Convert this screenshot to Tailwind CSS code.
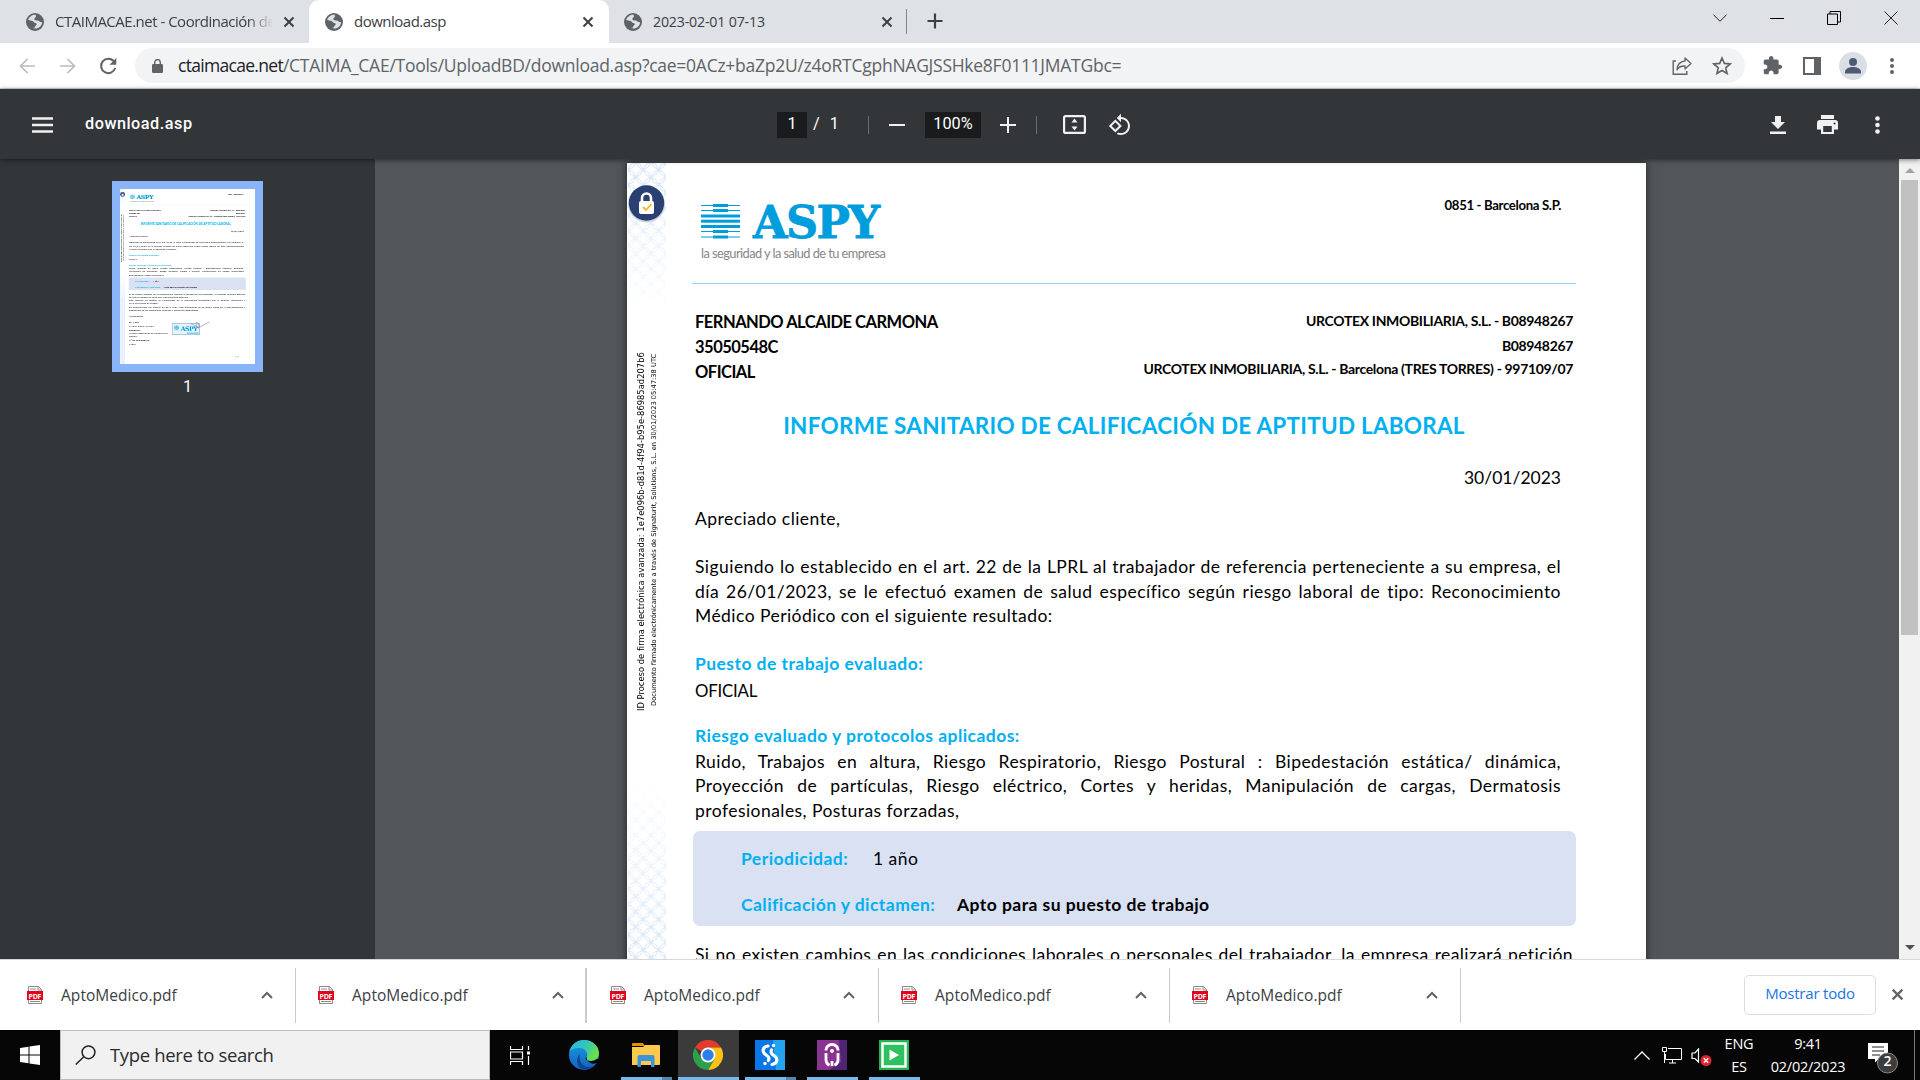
<!DOCTYPE html>
<html lang="es">
<head>
<meta charset="utf-8">
<title>download.asp</title>
<script src="https://cdn.jsdelivr.net/npm/@tailwindcss/browser@4"></script>
</head>
<body class="w-[1920px] h-[1080px] overflow-hidden flex flex-col bg-white font-['Open_Sans','Noto_Sans',sans-serif]">
<svg class="hidden">
  <symbol id="globe" viewBox="0 0 18 18"><circle cx="9" cy="9" r="9" fill="#5f6368"/><path d="M9.8 1.9C6.5 1.6 3.2 3.7 2.2 7c1.700 .3 3 .5 4.300 .9 1.300 .3 1.500 1.800 2.800 2 1.100 .1 1.700 .6 1.400 1.700-.3 1-1.400 1-1.600 2.100-.1.9-.9 1.300-2.400 1.100 1 .6 2.700 1 4.100.7 3.200-.7 5.300-3.300 5.300-6.400-1.200.2-2.600 0-3-1-.4-.9-1.600-.7-2.600-.6-1.200 0-2.300-.6-2.200-1.700.1-1.200 1.300-1.100 1.600-2.100.2-.6-.1-1.200-.1-1.800z" fill="#dee1e6"/></symbol>
  <symbol id="x" viewBox="0 0 12 12"><path d="M1.500 1.500l9 9M10.500 1.500l-9 9" stroke="currentColor" stroke-width="2" fill="none"/></symbol>
  <symbol id="up" viewBox="0 0 12 8"><path d="M1 7l5-5 5 5" stroke="#5f6368" stroke-width="2" fill="none"/></symbol>
  <symbol id="pdf" viewBox="0 0 16 18"><path d="M1.500 .5h10l3 3v14h-13z" fill="#fff" stroke="#8a8a8a"/><path d="M11 .5v3.500h3.500M3 3h6M3 15.500h10" stroke="#8a8a8a" fill="none"/><rect y="5" width="16" height="9" fill="#e2041b"/><text x="8" y="12.500" text-anchor="middle" font-family="Open Sans" font-weight="700" font-size="7" textLength="13" fill="#fff">PDF</text></symbol>
  <symbol id="bars" viewBox="0 0 39 35"><g fill="#009ddc"><rect y="1" width="39" height="1"/><rect x="12" width="15" height="3"/><rect y="6" width="39" height="1"/><rect x="12" y="5" width="15" height="3"/><rect y="10.500" width="39" height="3"/><rect y="15.700" width="39" height="3"/><rect y="21" width="39" height="3"/><rect y="27" width="39" height="1"/><rect x="12" y="26" width="15" height="3"/><rect y="32.500" width="39" height="1"/><rect x="12" y="31.500" width="15" height="3"/></g></symbol>
</svg>

<!-- Tab strip -->
<header class="h-[43px] shrink-0 bg-[#dee1e6] flex items-stretch text-[15px] text-[#3c4043] tracking-[-0.5px]">
  <div class="w-[309px] flex items-center pl-[26px] pr-3.5 bg-[#dee1e6]">
    <svg class="w-[18px] h-[18px] shrink-0"><use href="#globe"/></svg>
    <span class="ml-[11px] w-[219px] whitespace-nowrap overflow-hidden [mask-image:linear-gradient(90deg,#000_88%,transparent)]">CTAIMACAE.net - Coordinación de</span>
    <svg class="ml-[10px] w-3 h-3 shrink-0 text-[#3c4043]"><use href="#x"/></svg>
  </div>
  <div class="w-[300px] flex items-center pl-4 pr-[15px] bg-white rounded-t-[10px]">
    <svg class="w-[18px] h-[18px] shrink-0"><use href="#globe"/></svg>
    <span class="ml-[11px] flex-1 whitespace-nowrap">download.asp</span>
    <svg class="w-3 h-3 shrink-0"><use href="#x"/></svg>
  </div>
  <div class="w-[297px] flex items-center pl-[15px] pr-[13px]">
    <svg class="w-[18px] h-[18px] shrink-0"><use href="#globe"/></svg>
    <span class="ml-[11px] flex-1 whitespace-nowrap tracking-[-0.18px] text-[14.2px]">2023-02-01 07-13</span>
    <svg class="w-3 h-3 shrink-0"><use href="#x"/></svg>
  </div>
  <div class="w-px h-[25px] mt-[9px] bg-[#80868b]"></div>
  <svg class="ml-5 mt-[13px] w-4 h-4" viewBox="0 0 16 16"><path d="M8 .5v15M.5 8h15" stroke="#3c4043" stroke-width="2.200"/></svg>
  <div class="ml-auto flex items-center gap-[43px] pr-[22px] h-9">
    <svg class="w-[14px] h-2" viewBox="0 0 14 8"><path d="M.5.8L7 7.200 13.500.8" stroke="#222" fill="none"/></svg>
    <svg class="w-[14px] h-3" viewBox="0 0 14 12"><path d="M0 6.500h14" stroke="#000"/></svg>
    <svg class="w-[14px] h-[14px]" viewBox="0 0 14 14"><path d="M.5 3h10v10.500H.5zM3 3V.5h10.500V11H11" stroke="#000" fill="none"/></svg>
    <svg class="w-[14px] h-[14px]" viewBox="0 0 14 14"><path d="M.5.5l13 13M13.500.5l-13 13" stroke="#222" fill="none"/></svg>
  </div>
</header>

<!-- Address bar -->
<div class="h-[46px] shrink-0 border-b border-[#d5d7da] flex items-center bg-white">
  <svg class="ml-[19px] w-4 h-4" viewBox="0 0 16 16"><path d="M16 8H1.500M8.500 1L1.500 8l7 7" stroke="#babcbe" stroke-width="1.700" fill="none"/></svg>
  <svg class="ml-[25px] w-4 h-4" viewBox="0 0 16 16"><path d="M0 8h14.500M7.500 1l7 7-7 7" stroke="#babcbe" stroke-width="1.700" fill="none"/></svg>
  <svg class="ml-[23px] w-[18px] h-[18px]" viewBox="0 0 18 18"><path d="M15 4.500A7.200 7.200 0 1 0 16.200 11" stroke="#5f6368" stroke-width="2" fill="none"/><path d="M17.300 1v6.800h-6.800z" fill="#5f6368"/></svg>
  <div class="ml-[18px] w-[1610px] h-[35px] rounded-full bg-[#f1f3f4] flex items-center pl-[17px] pr-[13px]">
    <svg class="w-[11px] h-[14px]" viewBox="0 0 11 14"><rect y="5" width="11" height="9" rx="1.200" fill="#5f6368"/><path d="M2.700 6V3.400a2.800 2.800 0 0 1 5.600 0V6" stroke="#5f6368" stroke-width="1.400" fill="none"/></svg>
    <span class="ml-[15px] text-[17.5px] tracking-[-0.26px] whitespace-nowrap text-[#5f6368]"><span class="text-[#202124] tracking-[-0.7px]">ctaimacae.net</span>/CTAIMA_CAE/Tools/UploadBD/download.asp?cae=0ACz+baZp2U/z4oRTCgphNAGJSSHke8F0111JMATGbc=</span>
    <svg class="ml-auto w-5 h-[18px]" viewBox="0 0 20 18"><path d="M4 4H1.200v13.200h13.600V14" stroke="#5f6368" stroke-width="1.400" fill="none"/><path d="M13 1l6 5.500-6 5.500V9c-4-.2-6.500 1-8 4 .2-5 3-8.500 8-9z" stroke="#5f6368" stroke-width="1.300" fill="none" stroke-linejoin="round"/></svg>
    <svg class="ml-[20px] w-5 h-[19px]" viewBox="0 0 20 19"><path d="M10 2l2.300 5.400 5.900.5-4.500 3.900 1.400 5.700L10 14.500l-5.100 3 1.400-5.700-4.500-3.900 5.900-.5z" stroke="#5f6368" stroke-width="1.600" fill="none"/></svg>
  </div>
  <svg class="ml-[17px] w-[21px] h-[21px]" viewBox="0 0 24 24"><path fill="#5f6368" d="M20.500 11H19V7c0-1.100-.9-2-2-2h-4V3.500C13 2.120 11.880 1 10.500 1S8 2.120 8 3.500V5H4c-1.100 0-1.990.9-1.990 2v3.800H3.500c1.490 0 2.700 1.210 2.700 2.700s-1.210 2.700-2.700 2.700H2V20c0 1.100.9 2 2 2h3.800v-1.500c0-1.490 1.210-2.700 2.700-2.700 1.490 0 2.700 1.210 2.700 2.700V22H17c1.100 0 2-.9 2-2v-4h1.500c1.380 0 2.500-1.120 2.500-2.500S21.880 11 20.500 11z"/></svg>
  <svg class="ml-[20px] w-[18px] h-[18px]" viewBox="0 0 18 18"><path d="M1 1h16v16H1z" fill="#fff" stroke="#5f6368" stroke-width="2"/><path d="M11 1h6v16h-6z" fill="#5f6368"/></svg>
  <svg class="ml-[18px] w-7 h-7" viewBox="0 0 28 28"><circle cx="14" cy="14" r="14" fill="#dadfe6"/><circle cx="14" cy="10" r="4" fill="#4d5a73"/><path d="M6 21.500v-1.500c0-3.500 4-5 8-5s8 1.500 8 5v1.500z" fill="#4d5a73"/></svg>
  <svg class="ml-[23px] w-1 h-4" viewBox="0 0 4 16"><g fill="#5f6368"><circle cx="2" cy="2" r="2"/><circle cx="2" cy="8" r="2"/><circle cx="2" cy="14" r="2"/></g></svg>
</div>

<!-- PDF viewer toolbar -->
<div class="h-[70px] shrink-0 bg-[#323639] flex items-center pt-px text-white font-[Roboto,sans-serif] relative z-10 shadow-[0_1px_5px_rgba(0,0,0,0.5)]">
  <svg class="ml-8 w-[21px] h-4" viewBox="0 0 21 16"><path d="M0 1.500h21M0 8h21M0 14.500h21" stroke="#f1f1f1" stroke-width="2.400"/></svg>
  <span class="ml-8 w-[692px] text-[16.25px] tracking-[0.5px] font-medium">download.asp</span>
  <span class="w-[30px] h-[26px] bg-[#191b1c] flex items-center justify-center text-[16.25px]">1</span>
  <span class="w-[61px] pl-1.5 text-[16.25px] flex gap-[10px]"><span>/</span><span>1</span></span>
  <span class="w-px h-[18px] bg-[#6b6e70]"></span>
  <svg class="ml-[20px] w-4 h-4" viewBox="0 0 16 16"><path d="M0 8h16" stroke="#f1f1f1" stroke-width="2"/></svg>
  <span class="ml-5 w-14 h-[26px] bg-[#191b1c] flex items-center justify-center text-[16.25px]">100%</span>
  <svg class="ml-[19px] w-4 h-4" viewBox="0 0 16 16"><path d="M0 8h16M8 0v16" stroke="#f1f1f1" stroke-width="2"/></svg>
  <span class="ml-[20px] w-px h-[18px] bg-[#6b6e70]"></span>
  <svg class="ml-[26px] w-[23px] h-[19px]" viewBox="0 0 23 19"><rect x="1.100" y="1.100" width="20.800" height="16.800" rx="1.500" stroke="#f1f1f1" stroke-width="2.200" fill="none"/><path d="M11.500 3.500l3 4h-6zM11.500 15.500l3-4h-6z" fill="#f1f1f1"/></svg>
  <svg class="ml-[22px] w-6 h-6" viewBox="0 0 24 24"><path fill="#f1f1f1" d="M7.340 6.410L.86 12.900l6.490 6.480 6.490-6.480-6.500-6.490zM3.690 12.900l3.660-3.660L11 12.900l-3.660 3.660-3.650-3.660zm15.670-6.260C17.610 4.880 15.300 4 13 4V.76L8.760 5 13 9.240V6c1.790 0 3.580.68 4.950 2.050 2.730 2.730 2.730 7.170 0 9.900C16.580 19.320 14.790 20 13 20c-.97 0-1.940-.21-2.840-.61l-1.490 1.490C10.020 21.620 11.510 22 13 22c2.300 0 4.610-.88 6.360-2.640 3.520-3.510 3.520-9.210 0-12.720z"/></svg>
  <svg class="ml-auto w-4 h-[18px]" viewBox="0 0 16 18"><path fill="#f1f1f1" d="M5 0h6v6h4l-7 7-7-7h4zM0 15.500h16V18H0z"/></svg>
  <svg class="ml-[31px] w-[21px] h-[19px]" viewBox="0 0 21 19"><path fill="#f1f1f1" d="M4 0h13v4H4zM3 5h15a3 3 0 0 1 3 3v6.500h-4V19H4v-4.500H0V8a3 3 0 0 1 3-3zm3.200 6v6h8.600v-6z"/><circle cx="17.500" cy="8.500" r="1" fill="#323639"/></svg>
  <svg class="ml-[37px] mr-[40px] w-[5px] h-[18px]" viewBox="0 0 5 18"><g fill="#f1f1f1"><circle cx="2.500" cy="2.500" r="2.300"/><circle cx="2.500" cy="9" r="2.300"/><circle cx="2.500" cy="15.500" r="2.300"/></g></svg>
</div>

<!-- PDF viewer body -->
<main class="h-[800px] shrink-0 flex overflow-hidden bg-[#525659]">
  <aside class="w-[375px] bg-[#323639] flex flex-col items-center pt-[22px] font-[Roboto,sans-serif] text-white">
    <div class="w-[151px] h-[191px] bg-[#8ab4f8] p-2">
      <div id="thumb" class="w-[135px] h-[175px] overflow-hidden" aria-hidden="true"></div>
    </div>
    <span class="mt-[3px] text-[16.25px]">1</span>
  </aside>
  <div class="flex-1 pl-[252px] pt-1 overflow-hidden">
    <div id="page" class="relative w-[1019px] h-[1321px] bg-white text-black font-[Lato,sans-serif] [font-variant-ligatures:none] text-[17.5px] tracking-[0.45px] leading-[24px] pl-[68px] pr-[85px] shadow-[0_0_8px_rgba(0,0,0,0.6)]">
      <svg class="absolute left-px top-0 w-[39px] h-[1321px]" viewBox="0 0 39 1321">
        <defs>
          <pattern id="rings" width="15.300" height="15.300" patternUnits="userSpaceOnUse" y="-1"><g fill="none" stroke="#a9cbee" stroke-width=".9"><circle cx="7.650" cy="7.650" r="6.900"/><circle cx="0" cy="0" r="6.900"/><circle cx="15.300" cy="0" r="6.900"/><circle cx="0" cy="15.300" r="6.900"/><circle cx="15.300" cy="15.300" r="6.900"/></g></pattern>
          <linearGradient id="fadeOut" x2="0" y2="1"><stop stop-color="#fff" stop-opacity=".35"/><stop offset="1" stop-color="#fff"/></linearGradient>
          <linearGradient id="fadeIn" x2="0" y2="1"><stop stop-color="#fff"/><stop offset="1" stop-color="#fff" stop-opacity=".3"/></linearGradient>
        </defs>
        <rect width="38" height="146" fill="url(#rings)"/><rect width="39" height="146" fill="url(#fadeOut)"/>
        <rect y="620" width="38" height="701" fill="url(#rings)"/><rect y="620" width="39" height="200" fill="url(#fadeIn)"/>
      </svg>
      <svg class="absolute left-0 top-[20px] w-10 h-10" viewBox="0 0 40 40"><circle cx="19.500" cy="21" r="18.500" fill="#ccd2dc"/><circle cx="19.500" cy="20" r="17.700" fill="#2a4073"/><rect x="12" y="18" width="15" height="13" rx="2" fill="#fff"/><path d="M15 19v-4a4.500 4.500 0 0 1 9 0v4" stroke="#fff" stroke-width="2.600" fill="none"/><path d="M16 24l3 3 5.500-6" stroke="#f7b916" stroke-width="1.800" fill="none"/></svg>
      <div class="absolute left-[8px] top-[190px] h-[358px] w-[13px] [writing-mode:vertical-rl] rotate-180 font-['DejaVu_Sans',sans-serif] text-[8.4px] tracking-normal leading-[13px] whitespace-nowrap">ID Proceso de firma electrónica avanzada: 1e7e096b-d81d-4f94-b95e-86985ad207b6</div>
      <div class="absolute left-[21px] top-[190px] h-[353px] w-[13px] [writing-mode:vertical-rl] rotate-180 font-['DejaVu_Sans',sans-serif] text-[6.7px] tracking-normal leading-[13px] whitespace-nowrap">Documento firmado electrónicamente a través de Signaturit, Solutions, S.L. en 30/01/2023 05:47:38 UTC</div>

      <div class="h-[121px] -ml-[3px] -mr-[15px] pl-[9px] pr-[15px] flex justify-between border-b border-[#8dd3f5]">
        <div class="pt-[41px]">
          <div class="flex items-start h-[40px]">
            <svg class="w-[39px] h-[35px]"><use href="#bars"/></svg>
            <span class="ml-[13px] mt-px font-['DejaVu_Serif',serif] font-bold text-[44.5px] leading-[35px] tracking-[-1.6px] text-[#009ddc] [-webkit-text-stroke:0.8px_#009ddc]">ASPY</span>
          </div>
          <div class="text-[12.8px] text-[#868686] leading-[19px] tracking-[-0.55px] whitespace-nowrap">la seguridad y la salud de tu empresa</div>
        </div>
        <div class="pt-[30px] text-[13.2px] tracking-[-0.35px] font-bold">0851 - Barcelona S.P.</div>
      </div>
      <div class="h-[127px] pt-[26px] -mr-[12px] flex justify-between font-bold leading-[25px]">
        <div class="text-[16.5px] tracking-[-0.5px]">
          <div>FERNANDO ALCAIDE CARMONA</div><div>35050548C</div><div>OFICIAL</div>
        </div>
        <div class="-mt-[2px] text-right text-[14px] tracking-[-0.34px]">
          <div>URCOTEX INMOBILIARIA, S.L. - B08948267</div><div>B08948267</div><div class="-mt-[2px]">URCOTEX INMOBILIARIA, S.L. - Barcelona (TRES TORRES) - 997109/07</div>
        </div>
      </div>
      <h1 class="h-[30px] text-center mr-[8px] text-[22.5px] tracking-[0.25px] leading-[30px] font-bold text-[#00b0f0] whitespace-nowrap">INFORME SANITARIO DE CALIFICACIÓN DE APTITUD LABORAL</h1>
      <div class="mt-[25px] text-right tracking-normal">30/01/2023</div>
      <div class="mt-[17px]">Apreciado cliente,</div>
      <div class="mt-6 leading-[24.7px] whitespace-nowrap">
        <div class="[text-align-last:justify]">Siguiendo lo establecido en el art. 22 de la LPRL al trabajador de referencia perteneciente a su empresa, el</div>
        <div class="[text-align-last:justify]">día 26/01/2023, se le efectuó examen de salud específico según riesgo laboral de tipo: Reconocimiento</div>
        <div>Médico Periódico con el siguiente resultado:</div>
      </div>
      <h2 class="mt-[23px] font-bold text-[#00b0f0]">Puesto de trabajo evaluado:</h2>
      <div class="mt-[2.5px] text-[16.8px] tracking-[-0.2px]">OFICIAL</div>
      <h2 class="mt-[21px] font-bold text-[#00b0f0]">Riesgo evaluado y protocolos aplicados:</h2>
      <div class="mt-[2px] leading-[24.7px] whitespace-nowrap">
        <div class="[text-align-last:justify]">Ruido, Trabajos en altura, Riesgo Respiratorio, Riesgo Postural : Bipedestación estática/ dinámica,</div>
        <div class="[text-align-last:justify]">Proyección de partículas, Riesgo eléctrico, Cortes y heridas, Manipulación de cargas, Dermatosis</div>
        <div>profesionales, Posturas forzadas,</div>
      </div>
      <div class="mt-[7px] h-[95px] -ml-[2px] -mr-[15px] pl-[48px] pt-[16px] rounded-[7px] bg-[#d9e1f3]">
        <div class="flex"><span class="font-bold text-[#00b0f0] w-[132px]">Periodicidad:</span><span>1 año</span></div>
        <div class="flex mt-[22px] font-bold"><span class="text-[#00b0f0] w-[216px]">Calificación y dictamen:</span><span>Apto para su puesto de trabajo</span></div>
      </div>
      <div class="mt-[17px] -mr-[12px] leading-[23px] whitespace-nowrap [text-align-last:justify] tracking-[0.4px]">Si no existen cambios en las condiciones laborales o personales del trabajador, la empresa realizará petición</div>
    </div>
  </div>
  <div class="w-[21px] bg-[#f1f1f1] flex flex-col items-center">
    <svg class="mt-[9px] w-2.5 h-[5px]" viewBox="0 0 10 5"><path d="M5 0l5 5H0z" fill="#a3a3a3"/></svg>
    <div class="mt-[7px] w-[17px] h-[455px] bg-[#c1c1c1]"></div>
    <svg class="mt-auto mb-[9px] w-2.5 h-[5px]" viewBox="0 0 10 5"><path d="M0 0h10L5 5z" fill="#505050"/></svg>
  </div>
</main>

<!-- Lower part of the page, drawn in the preview -->
<template id="rest">
  <div class="-mr-[12px] leading-[23px] whitespace-nowrap">
    <div>de nuevo examen de salud con la periodicidad señalada.</div>
    <div class="[text-align-last:justify]">Este informe de aptitud se fundamenta en la información transmitida por la persona reconocida y</div>
    <div>en la evaluación de riesgos.</div>
    <div class="mt-[5px] [text-align-last:justify]">En cumplimiento del artículo 22 de la LPRL, este documento ha de formar parte de la documentación a</div>
    <div>disposición de las autoridades laborales y sanitarias competentes.</div>
    <div class="mt-[23px]">Atentamente,</div>
    <div class="mt-[27px] flex">
      <div class="w-[326px]">
        <div class="font-bold">Dr. / Dra.</div>
        <div class="mt-[7px]">MARIO COSTA GARCIA</div>
        <div class="mt-[7px] font-bold">Titulación:</div>
        <div>Médico especialista en Medicina del</div>
        <div>Trabajo</div>
        <div class="mt-[7px] font-bold">Nº de Colegiado/a:</div>
        <div class="mt-[4px]">24504</div>
      </div>
      <svg class="mt-[2px] w-[290px] h-[110px]" viewBox="0 0 290 110"><rect x="2" y="18" width="204" height="84" fill="#e6f4fb" stroke="#6e9bb8" stroke-width="4"/><svg x="12" y="30" width="42" height="40"><use href="#bars"/></svg><text x="64" y="70" font-family="DejaVu Serif" font-weight="700" font-size="48" textLength="130" fill="#009ddc">ASPY</text><path d="M110 84h90v12h-90z" fill="#8dd3f5"/><path d="M140 20c30 0 60 50 62 20s-30-50-20-10 20 10 100-25" stroke="#6a6f98" stroke-width="4" fill="none"/></svg>
    </div>
    <div class="mt-[66px] pl-[800px] text-[14px]">1 / 1</div>
  </div>
</template>

<!-- Download shelf -->
<div class="h-[71px] shrink-0 border-t border-[#d5d7da] bg-white flex items-center text-[15.5px] tracking-[0.05px] text-[#3c4043]">
  <div class="w-[296px] h-[55px] border-r border-[#c8cacd] flex items-center pl-[27px]"><svg class="w-4 h-[18px]"><use href="#pdf"/></svg><span class="ml-[18px] w-[200px] pt-0.5">AptoMedico.pdf</span><svg class="w-3 h-2"><use href="#up"/></svg></div>
  <div class="w-[291px] h-[55px] border-r-2 border-[#c8cacd] flex items-center pl-[22px]"><svg class="w-4 h-[18px]"><use href="#pdf"/></svg><span class="ml-[18px] w-[200px] pt-0.5">AptoMedico.pdf</span><svg class="w-3 h-2"><use href="#up"/></svg></div>
  <div class="w-[292px] h-[55px] border-r border-[#c8cacd] flex items-center pl-[23px]"><svg class="w-4 h-[18px]"><use href="#pdf"/></svg><span class="ml-[18px] w-[199px] pt-0.5">AptoMedico.pdf</span><svg class="w-3 h-2"><use href="#up"/></svg></div>
  <div class="w-[291px] h-[55px] border-r border-[#c8cacd] flex items-center pl-[22px]"><svg class="w-4 h-[18px]"><use href="#pdf"/></svg><span class="ml-[18px] w-[200px] pt-0.5">AptoMedico.pdf</span><svg class="w-3 h-2"><use href="#up"/></svg></div>
  <div class="w-[291px] h-[55px] border-r border-[#c8cacd] flex items-center pl-[22px]"><svg class="w-4 h-[18px]"><use href="#pdf"/></svg><span class="ml-[18px] w-[200px] pt-0.5">AptoMedico.pdf</span><svg class="w-3 h-2"><use href="#up"/></svg></div>
  <div class="ml-auto mr-[15px] w-[132px] h-10 rounded-[5px] border border-[#dadce0] flex items-center justify-center pb-[3px] text-[15px] tracking-[-0.2px] text-[#1a73e8]">Mostrar todo</div>
  <svg class="mr-4 w-[13px] h-[13px] mb-0.5 text-[#5f6368]"><use href="#x"/></svg>
</div>

<!-- Taskbar -->
<footer class="h-[50px] shrink-0 bg-[#060606] flex items-stretch text-white">
  <div class="w-[60px] flex items-center justify-center"><svg class="w-5 h-5" viewBox="0 0 20 20"><path fill="#fff" d="M0 3l8.500-1.200v7.700H0zM9.500 1.600L20 0v9.500H9.500zM0 10.500h8.500v7.700L0 17zM9.500 10.500H20V20L9.500 18.400z"/></svg></div>
  <div class="w-[430px] bg-[#f1f1f1] border border-[#bdbdbd] flex items-center pl-3.5 text-[#2b2b2b]">
    <svg class="w-[21px] h-5" viewBox="0 0 21 20"><circle cx="13.500" cy="7.300" r="6.400" stroke="#222" stroke-width="1.500" fill="none"/><path d="M8.800 11.800L.8 19.500" stroke="#222" stroke-width="1.500"/></svg>
    <span class="ml-3.5 text-[18.5px] tracking-[-0.35px]">Type here to search</span>
  </div>
  <div class="w-[60px] flex items-center justify-center"><svg class="w-5 h-[19px]" viewBox="0 0 20 19"><path d="M.5 0v3.500h12V0M.5 19v-3.500h12V19M.5 6h12v7H.5zM18.500 0v4M18.500 10v9" stroke="#fff" stroke-width="1.200" fill="none"/><path d="M17 5.500h3v3h-3z" fill="#fff"/></svg></div>
  <div class="w-[66px] flex items-center justify-center pl-0.5">
    <svg class="w-[30px] h-[30px]" viewBox="0 0 30 30">
      <defs><linearGradient id="eg" x1="0" y1="0" x2="1" y2=".4"><stop stop-color="#2ab4e8"/><stop offset=".6" stop-color="#33c7b4"/><stop offset="1" stop-color="#6be04a"/></linearGradient><linearGradient id="eb" x2="0" y2="1"><stop stop-color="#1b9de2"/><stop offset="1" stop-color="#1160c4"/></linearGradient></defs>
      <circle cx="15" cy="15" r="15" fill="url(#eb)"/>
      <path d="M.3 12C1.500 5 7.500 0 15 0c8.500 0 15 6 15 13 0 5-3.500 8-8 8-3.500 0-5.500-1-5.500-2.500 0-1 1.700-1.500 1.700-4C18.200 11 15 8 10.500 8 6 8 2 9.500.3 12z" fill="url(#eg)"/>
      <path d="M11 14c-2 6 2 12 8 13 3.500.3 6.500-1 8.500-4-2 3.700-7 7-12.500 7C9 29 5.500 19 11 14z" fill="#10458c"/>
      <path d="M18.200 14.500c0 2.500-1.700 3-1.700 4 0 1.500 2 2.500 5.500 2.500 2.500 0 4.500-.8 5.900-2.200l3 1-3.400 3.200c-5 2.500-12-2-9.300-8.500z" fill="#060606"/>
    </svg>
  </div>
  <div class="w-[62px] flex items-center justify-center relative pr-[14px]">
    <svg class="w-7 h-6 ml-3" viewBox="0 0 28 24"><path d="M0 1a1 1 0 0 1 1-1h10l2 3H0z" fill="#dc9400"/><path d="M0 4h11l2-2h14a1 1 0 0 1 1 1v18a1 1 0 0 1-1 1H0z" fill="#fdca4e"/><path d="M5.500 24V14a2 2 0 0 1 2-2h13a2 2 0 0 1 2 2v10h-3.500v-6h-10v6z" fill="#3d93d8"/></svg>
    <span class="absolute left-[5px] bottom-0 w-[41px] h-[3px] bg-[#76b9ed]"></span><span class="absolute left-[46px] bottom-0 w-2.5 h-[3px] bg-[#5586b0]"></span>
  </div>
  <div class="w-[61px] bg-[#3b3b3b] border-b-3 border-[#76b9ed] flex items-center justify-center pr-[2px]">
    <svg class="w-[30px] h-[30px] mt-[3px]" viewBox="0 0 30 30"><path d="M15 15L2 7.500A15 15 0 0 1 28 7.500H15z" fill="#e33b2e"/><path d="M15 7.500h13A15 15 0 0 1 15 30l6.500-11.200z" fill="#fbc116"/><path d="M2 7.500A15 15 0 0 0 15 30l6.500-11.200L15 22.500 8.500 18.800z" fill="#2da04c"/><circle cx="15" cy="15" r="7.500" fill="#fff"/><circle cx="15" cy="15" r="5.700" fill="#2f7de9"/></svg>
  </div>
  <div class="w-[62px] relative flex items-center justify-center">
    <svg class="w-[30px] h-[30px]" viewBox="0 0 30 30"><rect width="30" height="30" fill="#0878e8"/><path d="M18 0h12v30h-9z" fill="#22a5ee"/><g stroke="#fff" stroke-width="3.200" fill="none" stroke-linecap="round"><path d="M13 6C7 7 7 12 10.500 14.500S14.500 18 13.500 20.500M17 24.500c6-1 6-6 2.500-8.500S15.500 12.500 16.500 10"/></g><circle cx="18.500" cy="5.500" r="1.700" fill="#fff"/><circle cx="10" cy="23.500" r="1.700" fill="#fff"/></svg>
    <span class="absolute left-[6px] bottom-0 w-[41px] h-[3px] bg-[#76b9ed]"></span><span class="absolute left-[47px] bottom-0 w-2.5 h-[3px] bg-[#5586b0]"></span>
  </div>
  <div class="w-[62px] relative flex items-center justify-center">
    <svg class="w-[30px] h-[30px]" viewBox="0 0 30 30"><rect width="30" height="30" fill="#8b3391"/><path d="M22 0h8v30H12l12-8z" fill="#4f2474"/><g stroke="#fff" stroke-width="2.800" fill="none"><path d="M9 10.500V10a6 5.500 0 0 1 12 0v.5M9 13v7a6 6 0 0 0 3.500 5.300M21 13v7a6 6 0 0 1-3.500 5.300M15 21v5"/></g><circle cx="15" cy="11" r="2" fill="#fff"/></svg>
    <span class="absolute left-[6px] bottom-0 w-[51px] h-[3px] bg-[#76b9ed]"></span>
  </div>
  <div class="w-[62px] relative flex items-center justify-center">
    <svg class="w-[30px] h-[30px]" viewBox="0 0 30 30"><rect width="30" height="30" fill="#22b455"/><rect x="3.500" y="3.500" width="23" height="23" fill="#2fc05f" stroke="#fff" stroke-width="2.500"/><path d="M10.500 9.500l9.500 5.500-9.500 5.500z" fill="#fff"/></svg>
    <span class="absolute left-[6px] bottom-0 w-[51px] h-[3px] bg-[#76b9ed]"></span>
  </div>
  <div class="ml-auto flex items-center text-[14.5px] leading-[23px] tracking-[-0.25px] text-center">
    <svg class="w-4 h-[9px]" viewBox="0 0 16 9"><path d="M.5 8.500L8 1l7.500 7.500" stroke="#fff" stroke-width="1.300" fill="none"/></svg>
    <svg class="ml-3 w-5 h-[17px]" viewBox="0 0 20 17"><path d="M6 1.500h13.500v11H3.500V7M7 16h7M10.500 12.500V16M.5.5h4v4h-4zM2.500 5v11" stroke="#fff" fill="none"/></svg>
    <svg class="ml-[9px] w-[21px] h-[19px] mt-1" viewBox="0 0 21 19"><path d="M1 5h3l3.500-4v13L4 10.500H1z" stroke="#fff" stroke-width="1.200" fill="none"/><circle cx="15" cy="12.500" r="5.500" fill="#e0242f"/><path d="M12.800 10.300l4.400 4.400M17.200 10.300l-4.400 4.400" stroke="#fff" stroke-width="1.300"/></svg>
    <div class="ml-[11px] w-[32px]"><div>ENG</div><div>ES</div></div>
    <div class="ml-3.5 w-[78px]"><div>9:41</div><div>02/02/2023</div></div>
    <div class="ml-[21px] mt-1.5 relative w-[31px] h-[31px]">
      <svg class="w-[31px] h-[31px]" viewBox="0 0 31 31"><path d="M0 0h20v16H11l-4 3.500V16H0z" fill="#fff"/><path d="M4 4h12M4 8h12M4 12h8" stroke="#222"/><circle cx="19.500" cy="20" r="10" fill="#3c3c3c" stroke="#8a8a8a"/></svg>
      <span class="absolute left-[9px] top-[8px] w-[21px] text-center text-sm font-semibold">2</span>
    </div>
    <div class="ml-[15px] mr-[5px] w-px h-[50px] bg-[#777]"></div>
  </div>
</footer>

<script>
  // The sidebar preview is a scaled copy of the whole page.
  const copy = document.getElementById('page').cloneNode(true);
  copy.removeAttribute('id');
  copy.appendChild(document.getElementById('rest').content.cloneNode(true));
  copy.style.transform = 'scale(0.1325)';
  copy.style.transformOrigin = '0 0';
  document.getElementById('thumb').appendChild(copy);
</script>
</body>
</html>
